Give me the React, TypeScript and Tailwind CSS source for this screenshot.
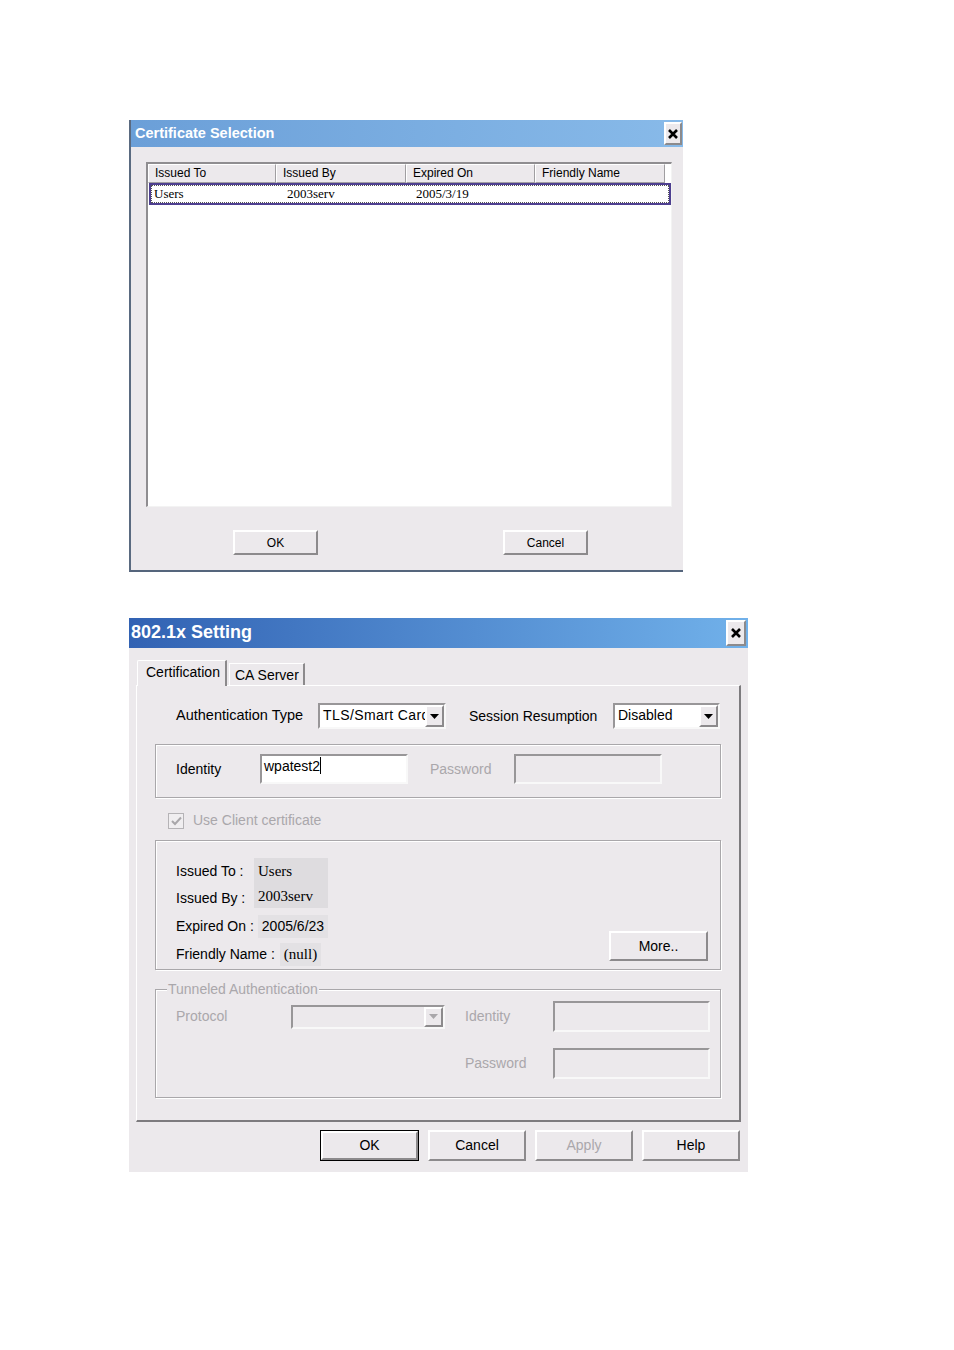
import React from 'react'

const sunk = 'border-2 border-t-[#989698] border-l-[#989698] border-r-[#f8f8f8] border-b-[#f8f8f8]'
const raised = 'border-2 border-t-white border-l-white border-r-[#8c8a8c] border-b-[#8c8a8c]'
const etched = 'border border-[#a9a7aa] shadow-[inset_1px_1px_0_#ffffff,1px_1px_0_#ffffff]'
const dim = 'text-[#aaa7ab]'

function CloseBox({ className }: { className: string }) {
  return (
    <div className={`${raised} bg-[#ece9ec] flex items-center justify-center ${className}`}>
      <svg width="10" height="10" viewBox="0 0 10 10">
        <path d="M1 1L9 9M9 1L1 9" stroke="#000" strokeWidth="2.6" />
      </svg>
    </div>
  )
}

function Arrow({ disabled }: { disabled?: boolean }) {
  return (
    <div className={`${raised} bg-[#ece9ec] w-[19px] h-full shrink-0 flex items-center justify-center`}>
      <svg width="9" height="5" viewBox="0 0 9 5">
        <path d="M0 0H9L4.5 5Z" fill={disabled ? '#a9a7aa' : '#000'} />
      </svg>
    </div>
  )
}

function Button({ label, className = '', disabled }: { label: string; className?: string; disabled?: boolean }) {
  return (
    <div
      className={`${raised} bg-[#ece9ec] flex items-center justify-center ${disabled ? dim : 'text-black'} ${className}`}
    >
      {label}
    </div>
  )
}

function CertificateSelection() {
  const headers = [
    { name: 'Issued To', w: 'w-[128px]' },
    { name: 'Issued By', w: 'w-[130px]' },
    { name: 'Expired On', w: 'w-[129px]' },
    { name: 'Friendly Name', w: 'w-[130px]' },
  ]
  return (
    <div className="w-[554px] h-[452px] flex flex-col bg-[#ece9ec] border-l-2 border-b-2 border-l-[#5a6a80] border-b-[#55657c]">
      <div className="h-[27px] flex items-start justify-between bg-gradient-to-r from-[#6b9fd8] to-[#88bae9] pl-[4px] pr-[1px]">
        <span className="text-white font-bold text-[14.5px] leading-[27px]">Certificate Selection</span>
        <CloseBox className="w-[18px] h-[23px] mt-[2px]" />
      </div>
      <div className="flex-1 flex flex-col pl-[15px] pt-[15px]">
        <div className="w-[526px] h-[345px] bg-white border-t-2 border-l-2 border-r border-b border-t-[#8f8d90] border-l-[#8f8d90] border-r-[#f3f3f3] border-b-[#f3f3f3] flex flex-col">
          <div className="h-[19px] flex bg-[#ece9ec]">
            {headers.map((h) => (
              <div
                key={h.name}
                className={`${h.w} h-full border-t border-l border-t-white border-l-white border-r border-b border-r-[#a09ea1] border-b-[#a09ea1] pl-[6px] text-[12px] leading-[17px] text-black`}
              >
                {h.name}
              </div>
            ))}
            <div className="flex-1 bg-white" />
          </div>
          <div className="ml-[1px] h-[22px] border-2 border-[#4e3f90]">
            <div className="h-full border border-dotted border-[#555] flex items-center text-[13px] leading-[16px] text-black font-['Liberation_Serif',serif]">
              <span className="w-[132px] pl-[2px]">Users</span>
              <span className="w-[129px] pl-[3px]">2003serv</span>
              <span className="pl-[3px]">2005/3/19</span>
            </div>
          </div>
        </div>
        <div className="mt-[23px] flex gap-[185px] pl-[87px] text-[12px]">
          <Button label="OK" className="w-[85px] h-[25px]" />
          <Button label="Cancel" className="w-[85px] h-[25px]" />
        </div>
      </div>
    </div>
  )
}

function Setting() {
  return (
    <div className="w-[619px] h-[554px] bg-[#ece9ec] flex flex-col text-[14px] text-black">
      <div className="h-[30px] flex items-start justify-between bg-gradient-to-r from-[#3262b3] to-[#71b1ea] pl-[2px] pr-[2px]">
        <span className="text-white font-bold text-[18px] leading-[28px]">802.1x Setting</span>
        <CloseBox className="w-[20px] h-[26px] mt-[2px]" />
      </div>

      <div className="h-[37px] flex items-end pl-[8px]">
        <div className="relative z-10 w-[90px] h-[26px] -mb-[1px] bg-[#ece9ec] border-t border-l border-t-white border-l-white border-r-2 border-r-[#8c8a8c] rounded-tl-[2px] pl-[8px] pt-[2px] leading-[18px]">
          Certification
        </div>
        <div className="ml-[2px] w-[76px] h-[22px] border-t border-l border-t-white border-l-white border-r-2 border-r-[#8c8a8c] pl-[5px] pt-[2px] leading-[18px]">
          CA Server
        </div>
      </div>

      <div className="ml-[7px] w-[605px] h-[437px] border-t border-l border-t-white border-l-white border-r-2 border-b-2 border-r-[#7d7b7e] border-b-[#7d7b7e] pl-[18px] pr-[18px] pt-[17px] flex flex-col">
        <div className="h-[26px] flex items-center pl-[21px]">
          <span className="w-[142px] text-[14.5px]">Authentication Type</span>
          <div className={`${sunk} w-[128px] h-[26px] bg-white flex`}>
            <span className="flex-1 min-w-0 overflow-hidden whitespace-nowrap pl-[3px] leading-[20px] tracking-[0.4px]">TLS/Smart Card</span>
            <Arrow />
          </div>
          <span className="ml-[23px] w-[144px]">Session Resumption</span>
          <div className={`${sunk} w-[107px] h-[26px] bg-white flex`}>
            <span className="flex-1 pl-[3px] leading-[20px]">Disabled</span>
            <Arrow />
          </div>
        </div>

        <div className={`${etched} mt-[15px] h-[54px] flex items-start pt-[9px] pl-[20px]`}>
          <div className="h-[30px] flex items-center">
            <span className="w-[84px]">Identity</span>
            <div className={`${sunk} w-[148px] h-[30px] bg-white flex items-start pl-[2px] pt-[1px]`}>
              <span className="leading-[18px]">wpatest2</span>
              <span className="w-[1px] h-[17px] bg-black" />
            </div>
            <span className={`ml-[22px] w-[84px] ${dim}`}>Password</span>
            <div className={`${sunk} w-[148px] h-[30px]`} />
          </div>
        </div>

        <div className="h-[42px] flex items-center pl-[13px] pt-[3px]">
          <div className="w-[16px] h-[16px] border border-[#b5b3b6] bg-[#f0eef0] flex items-center justify-center">
            <svg width="11" height="10" viewBox="0 0 11 10">
              <path d="M1 5L4 8L10 1.5" stroke="#a9a7aa" strokeWidth="2" fill="none" />
            </svg>
          </div>
          <span className={`ml-[9px] ${dim}`}>Use Client certificate</span>
        </div>

        <div className={`${etched} h-[130px] flex`}>
          <div className="flex-1 flex flex-col pt-[17px] pl-[20px]">
            <div className="h-[27px] flex items-center">
              <span className="w-[78px]">Issued To :</span>
              <span className="w-[74px] h-full bg-[#dedcdf] pl-[4px] flex items-center font-['Liberation_Serif',serif] text-[15px]">Users</span>
            </div>
            <div className="h-[27px] flex items-center">
              <span className="w-[78px]">Issued By :</span>
              <span className="w-[74px] h-[23px] self-start bg-[#dedcdf] pl-[4px] flex items-center font-['Liberation_Serif',serif] text-[15px]">2003serv</span>
            </div>
            <div className="h-[28px] flex items-center">
              <span>Expired On :</span>
              <span className="ml-[4px] h-[23px] bg-[#e3e1e4] px-[4px] flex items-center">2005/6/23</span>
            </div>
            <div className="h-[28px] flex items-center">
              <span>Friendly Name :</span>
              <span className="ml-[5px] h-[23px] bg-[#e3e1e4] px-[4px] flex items-center font-['Liberation_Serif',serif] text-[15px]">(null)</span>
            </div>
          </div>
          <Button label="More.." className="w-[99px] h-[30px] self-end mb-[8px] mr-[12px]" />
        </div>

        <div className={`${etched} mt-[19px] h-[109px] flex flex-col`}>
          <span className={`-mt-[9px] ml-[11px] self-start bg-[#ece9ec] px-[1px] leading-[16px] ${dim}`}>
            Tunneled Authentication
          </span>
          <div className="mt-[4px] pl-[20px] h-[31px] flex items-center">
            <span className={`w-[115px] ${dim}`}>Protocol</span>
            <div className={`${sunk} w-[154px] h-[24px] flex justify-end`}>
              <Arrow disabled />
            </div>
            <span className={`ml-[20px] w-[88px] ${dim}`}>Identity</span>
            <div className={`${sunk} w-[157px] h-[31px]`} />
          </div>
          <div className="mt-[16px] pl-[20px] h-[31px] flex items-center">
            <span className={`ml-[289px] w-[88px] ${dim}`}>Password</span>
            <div className={`${sunk} w-[157px] h-[31px]`} />
          </div>
        </div>
      </div>

      <div className="mt-[8px] flex justify-end pr-[8px] gap-[9px]">
        <div className="w-[99px] h-[31px] border border-black flex">
          <Button label="OK" className="flex-1" />
        </div>
        <Button label="Cancel" className="w-[98px] h-[31px]" />
        <Button label="Apply" className="w-[98px] h-[31px]" disabled />
        <Button label="Help" className="w-[98px] h-[31px]" />
      </div>
    </div>
  )
}

export default function App() {
  return (
    <div className="w-[954px] min-h-[1350px] bg-white pt-[120px] pl-[129px] flex flex-col gap-[46px] font-['Liberation_Sans',Arial,sans-serif]">
      <CertificateSelection />
      <Setting />
    </div>
  )
}
